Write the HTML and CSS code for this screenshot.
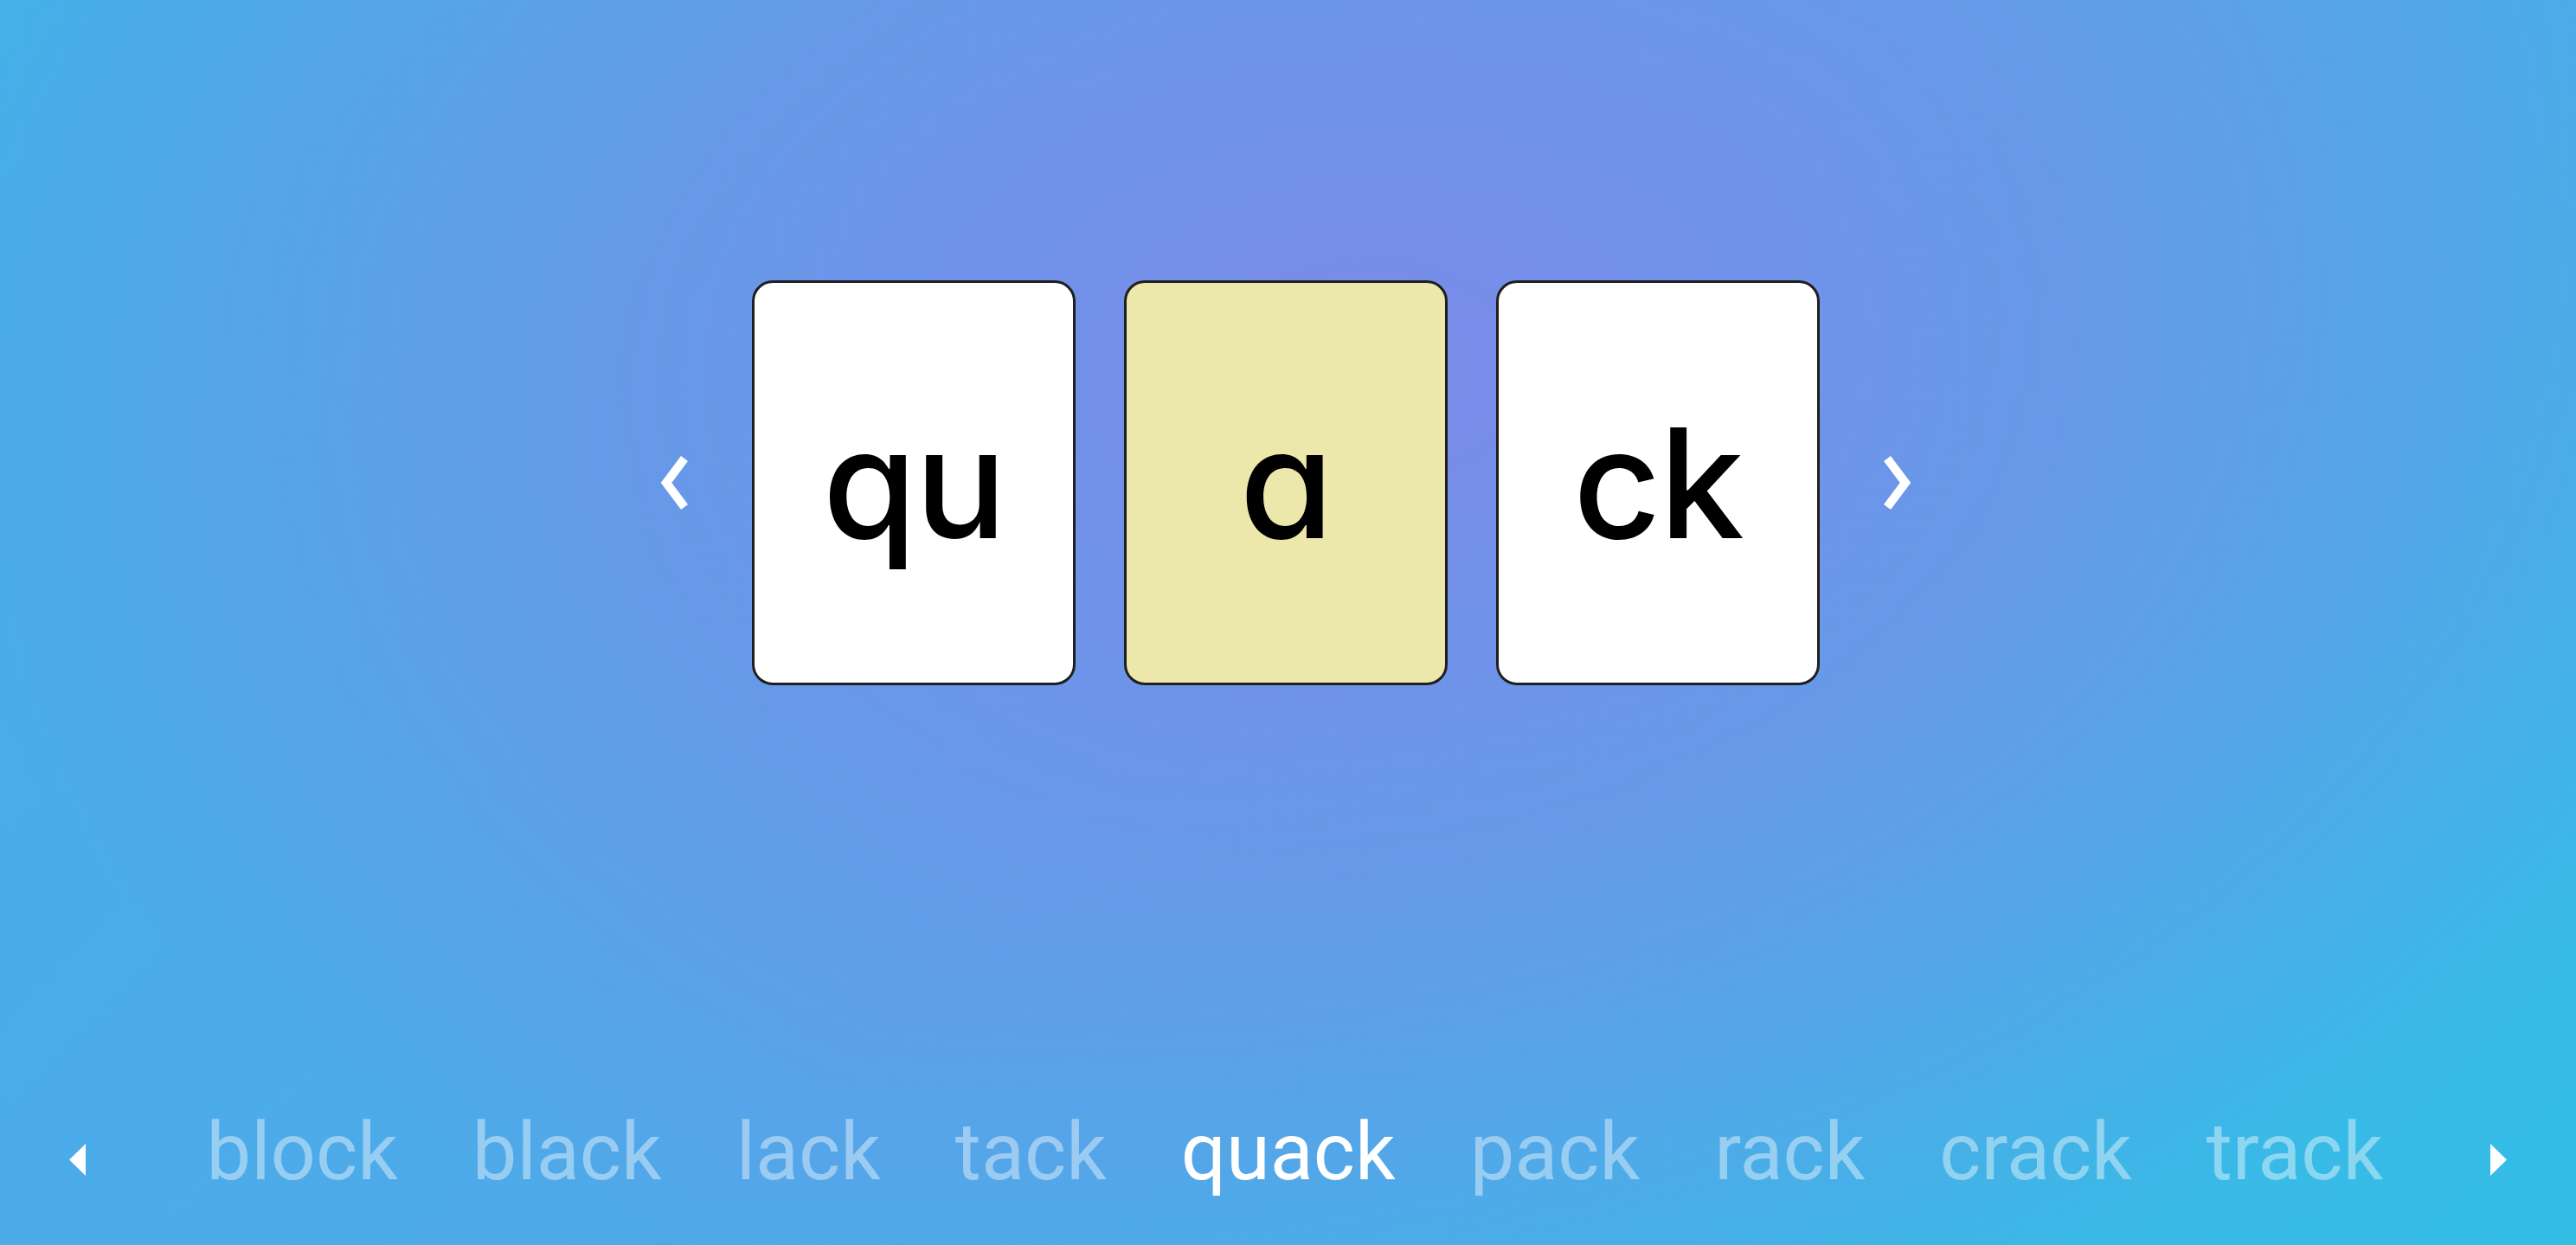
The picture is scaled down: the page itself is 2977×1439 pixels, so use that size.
FILE: index.html
```html
<!DOCTYPE html>
<html lang="en">
<head>
<meta charset="utf-8">
<title>quack</title>
<link rel="stylesheet" href="styles.css">
</head>
<body>
  <main class="app">
    <section class="stage">
      <button class="nav-chevron" aria-label="Previous">
        <svg width="40" height="70" viewBox="0 0 40 70"><polyline points="31,7 10,35 31,63" fill="none" stroke="#fff" stroke-width="10"/></svg>
      </button>
      <div class="cards">
        <div class="card"><span class="grapheme">qu</span></div>
        <div class="card card-active"><span class="grapheme">a</span></div>
        <div class="card"><span class="grapheme">ck</span></div>
      </div>
      <button class="nav-chevron" aria-label="Next">
        <svg width="40" height="70" viewBox="0 0 40 70"><polyline points="9,7 30,35 9,63" fill="none" stroke="#fff" stroke-width="10"/></svg>
      </button>
    </section>
    <nav class="wordbar">
      <button class="tri tri-left" aria-label="Scroll left">
        <svg width="19" height="37" viewBox="0 0 19 37"><polygon points="0,18.5 19,0 19,37" fill="#fff"/></svg>
      </button>
      <div class="words" id="words">
        <ul class="word-track">
          <li class="word">back</li>
          <li class="word">block</li>
          <li class="word">black</li>
          <li class="word">lack</li>
          <li class="word">tack</li>
          <li class="word word-active">quack</li>
          <li class="word">pack</li>
          <li class="word">rack</li>
          <li class="word">crack</li>
          <li class="word">track</li>
          <li class="word">stack</li>
        </ul>
      </div>
      <button class="tri tri-right" aria-label="Scroll right">
        <svg width="19" height="37" viewBox="0 0 19 37"><polygon points="19,18.5 0,0 0,37" fill="#fff"/></svg>
      </button>
    </nav>
  </main>
  <script src="script.js"></script>
</body>
</html>
```
FILE: styles.css
```css
html, body {
  margin: 0;
  padding: 0;
  height: 100%;
}
body {
  overflow: hidden;
  font-family: Roboto, "Liberation Sans", sans-serif;
  background:
    radial-gradient(ellipse 2000px 1350px at 1580px 430px, rgba(123, 139, 233, 1) 0%, rgba(123, 139, 233, 0.6) 40%, rgba(123, 139, 233, 0) 85%),
    linear-gradient(135deg, #44b0e8 0%, #4fa9e9 50%, #33bee6 100%);
}
.app {
  display: flex;
  flex-direction: column;
  height: 100vh;
}
.stage {
  height: 1116px;
  display: flex;
  align-items: center;
  justify-content: center;
  gap: 69px;
  padding-right: 5px;
}
.nav-chevron {
  background: none;
  border: 0;
  padding: 0;
  width: 40px;
  height: 70px;
  display: flex;
}
.cards {
  display: flex;
  gap: 56px;
}
.card {
  box-sizing: border-box;
  width: 374px;
  height: 468px;
  background: #ffffff;
  border: 3px solid #1f1f1f;
  border-radius: 24px;
  display: flex;
  align-items: center;
  justify-content: center;
}
.card-active {
  background: #ece7ab;
}
.grapheme {
  font-family: Inter, "Noto Sans", sans-serif;
  font-feature-settings: "cv11" 1;
  font-weight: 500;
  font-size: 176px;
  line-height: 1;
  color: #000;
  letter-spacing: -2px;
}
.wordbar {
  margin-top: 158px;
  height: 115px;
  display: flex;
  align-items: center;
  padding: 0 80px;
  gap: 53px;
}
.tri {
  background: none;
  border: 0;
  padding: 0;
  width: 19px;
  height: 37px;
  margin-top: 18px;
  display: flex;
  flex: none;
}
.words {
  position: relative;
  flex: 1;
  overflow: hidden;
  height: 115px;
}
.word-track {
  list-style: none;
  margin: 0;
  padding: 0;
  display: flex;
  gap: 86px;
  width: max-content;
}
.word {
  font-size: 92px;
  line-height: 115px;
  color: rgba(255, 255, 255, 0.42);
  white-space: nowrap;
}
.word-active {
  color: #ffffff;
}
```
FILE: script.js
```js
(function () {
  function center() {
    var vp = document.getElementById('words');
    var active = vp.querySelector('.word-active');
    var vpRect = vp.getBoundingClientRect();
    var aRect = active.getBoundingClientRect();
    var offset = aRect.left - vpRect.left + vp.scrollLeft;
    vp.scrollLeft = offset + aRect.width / 2 - vp.clientWidth / 2;
  }
  center();
  if (document.fonts && document.fonts.ready) {
    document.fonts.ready.then(center);
  }
  window.addEventListener('load', center);
})();
```
